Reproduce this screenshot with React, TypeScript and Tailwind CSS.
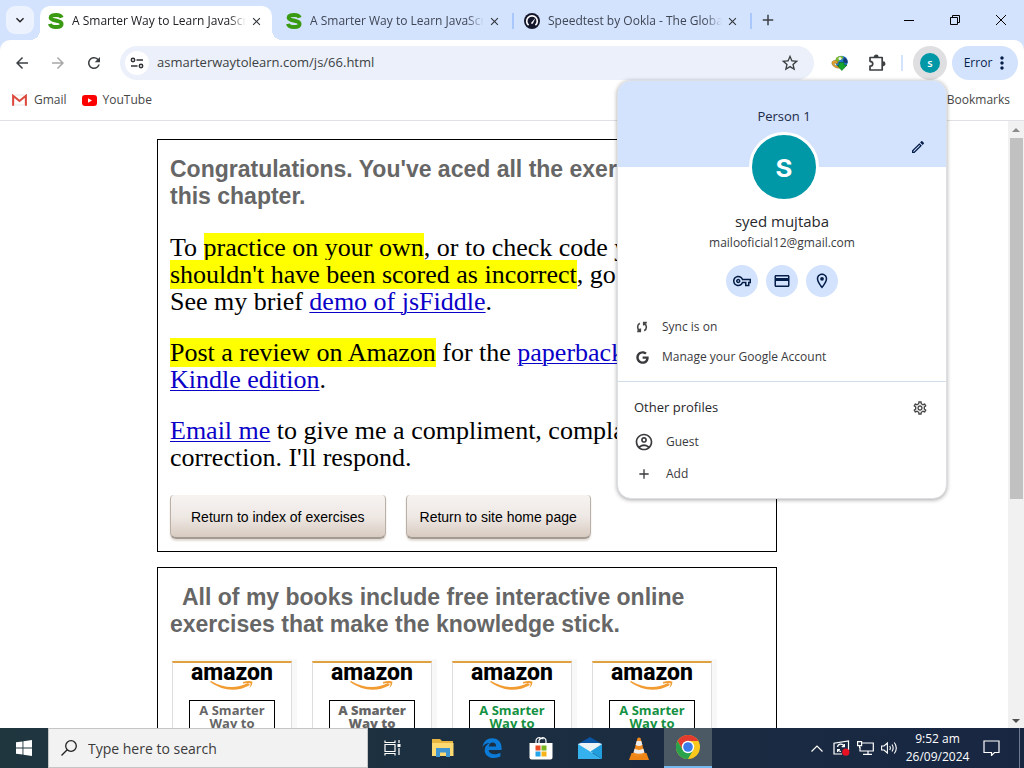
import React from "react";
import {
  MdArrowBack,
  MdArrowForward,
  MdRefresh,
  MdStarOutline,
  MdOutlineVpnKey,
  MdOutlineCreditCard,
  MdOutlineLocationOn,
  MdAdd,
  MdOutlineSettings,
  MdOutlineAccountCircle,
  MdOutlineEdit,
  MdExpandMore,
  MdClose,
  MdMoreVert,
  MdSync,
} from "react-icons/md";
import { FaGoogle } from "react-icons/fa";

const UI = "font-['Open_Sans','Noto_Sans',sans-serif]";

function SFavicon() {
  return (
    <svg viewBox="0 0 16 16" className="size-4 shrink-0" fill="none" stroke="#3a9a12" aria-hidden="true">
      <path d="M13.7 4.6C13 2.6 11 2 8.1 2C5 2 2.6 2.8 2.6 4.7C2.6 8.4 13.6 6.5 13.6 11C13.6 13.2 11.2 14 8.1 14C4.7 14 2.4 13 2 10.8" strokeWidth="3.9" />
    </svg>
  );
}

function SpeedFavicon() {
  return (
    <svg viewBox="0 0 16 16" className="size-4 shrink-0" aria-hidden="true">
      <circle cx="8" cy="8" r="8" fill="#15172b" />
      <path d="M4.6 12.2A5.3 5.3 0 1 1 11.4 12.2" fill="none" stroke="#fff" strokeWidth="1.7" />
      <path d="M7 9.9L11.4 5L8.9 10.4A1.2 1.2 0 0 1 7 9.9Z" fill="#fff" />
    </svg>
  );
}

function Tab({ title, icon, active }: { title: string; icon: React.ReactNode; active?: boolean }) {
  return (
    <div
      role="tab"
      aria-selected={!!active}
      className={`relative flex h-[34px] w-[232px] shrink-0 items-center pb-1 pl-2 pr-2 ${active ? "rounded-t-[10px] bg-white" : ""}`}
    >
      {active && (
        <>
          <span className="absolute -left-2.5 bottom-0 size-2.5 bg-[radial-gradient(circle_at_0_0,transparent_10px,white_10px)]" />
          <span className="absolute -right-2.5 bottom-0 size-2.5 bg-[radial-gradient(circle_at_100%_0,transparent_10px,white_10px)]" />
        </>
      )}
      {icon}
      <span
        className={`ml-2 w-[174px] overflow-hidden whitespace-nowrap text-[12px] [mask-image:linear-gradient(to_right,black_90%,transparent)] ${active ? "text-[#202124]" : "text-[#3f4654]"}`}
      >
        {title}
      </span>
      <button aria-label="Close tab" className="ml-auto flex size-4 items-center justify-center text-[#30343a]">
        <MdClose className="size-[13px]" />
      </button>
    </div>
  );
}

function Separator() {
  return <span className="mx-0.5 mb-1 h-4 w-0.5 shrink-0 bg-[#a8c7fa]" />;
}

function TabStrip() {
  return (
    <div className="flex h-10 shrink-0 items-end bg-[#d3e2fd]">
      <button aria-label="Search tabs" className="mb-1.5 ml-1.5 mr-1.5 flex size-7 shrink-0 items-center justify-center rounded-[9px] bg-[#ecf2fe] text-[#1f1f1f]">
        <MdExpandMore className="size-4" />
      </button>
      <div role="tablist" className="flex items-center">
        <Tab active title="A Smarter Way to Learn JavaScript" icon={<SFavicon />} />
        <span className="w-1.5" />
        <Tab title="A Smarter Way to Learn JavaScript" icon={<SFavicon />} />
        <Separator />
        <Tab title="Speedtest by Ookla - The Global Broadband" icon={<SpeedFavicon />} />
        <Separator />
      </div>
      <button aria-label="New tab" className="mb-1.5 flex size-7 shrink-0 items-center justify-center text-[#3c4043]">
        <MdAdd className="size-[18px]" />
      </button>
      <div className="ml-auto flex h-10 shrink-0 text-black">
        <button aria-label="Minimize" className="flex w-[46px] items-center justify-center">
          <svg viewBox="0 0 10 10" className="size-2.5"><path d="M0 5.5H10" stroke="currentColor" /></svg>
        </button>
        <button aria-label="Restore" className="flex w-[46px] items-center justify-center">
          <svg viewBox="0 0 10 10" className="size-2.5" fill="none" stroke="currentColor"><path d="M.5 2.5H7.5V9.5H.5ZM2.5 2.5V.5H9.5V7.5H7.5" /></svg>
        </button>
        <button aria-label="Close" className="flex w-[46px] items-center justify-center">
          <svg viewBox="0 0 10 10" className="size-2.5"><path d="M0 0L10 10M10 0L0 10" stroke="currentColor" /></svg>
        </button>
      </div>
    </div>
  );
}

function Toolbar() {
  const nav = "flex w-9 shrink-0 items-center justify-center";
  return (
    <div className="bg-[#d3e2fd]">
      <div className="flex h-[46px] items-center rounded-t-[10px] bg-white pl-1 pr-1.5 text-[#3c4043]">
        <button aria-label="Back" className={nav}><MdArrowBack className="size-[18px]" /></button>
        <button aria-label="Forward" className={`${nav} text-[#a8a8a8]`}><MdArrowForward className="size-[18px]" /></button>
        <button aria-label="Reload" className={nav}><MdRefresh className="size-[18px]" /></button>
        <div className="ml-2 flex h-[34px] min-w-0 flex-1 items-center rounded-full bg-[#ebf0fa] pl-[5px] pr-3.5">
          <button aria-label="View site information" className="flex size-6 shrink-0 items-center justify-center rounded-full bg-white">
            <svg viewBox="0 0 14 14" className="size-3.5" fill="none" stroke="#303236" strokeWidth="1.5">
              <circle cx="3" cy="4" r="1.7" /><path d="M6.5 4H13M1 10H7.5" /><circle cx="11" cy="10" r="1.7" />
            </svg>
          </button>
          <input aria-label="Address" defaultValue="asmarterwaytolearn.com/js/66.html" className="ml-2 min-w-0 flex-1 bg-transparent text-[13px] text-[#3c4043] outline-none" />
          <button aria-label="Bookmark this tab"><MdStarOutline className="size-5" /></button>
        </div>
        <button aria-label="Download manager" className="ml-[17px] mr-[18px]">
          <svg viewBox="0 0 18 18" className="size-[18px]">
            <circle cx="10.5" cy="8" r="6.2" fill="#2479ce" />
            <path d="M5 4Q8 1 12 2.4Q13 5 9 6Q7 9 4.5 8Z" fill="#7db928" />
            <path d="M13 3Q17 5 16.6 9Q14 10 12 7Z" fill="#193d72" />
            <path d="M1 10C0 7 4 5 7 8L6 10C4 8 2.5 9 3.5 11Q6 13 11 12V14Q3 15 1 10Z" fill="#e7a42d" stroke="#776314" strokeWidth=".5" />
            <path d="M8 8.5H13V11H16L10.8 16.5L6.5 11.5H8Z" fill="#18a52e" stroke="#08661a" strokeWidth=".6" />
            <circle cx="9" cy="4.5" r="1.5" fill="#e8f4f8" />
          </svg>
        </button>
        <button aria-label="Extensions" className="mr-3.5">
          <svg viewBox="0 0 20 20" className="size-5" fill="none" stroke="currentColor" strokeWidth="1.7" strokeLinejoin="round">
            <path d="M3 4.5H15.2V17H3V13.2C6.7 13 6.7 8.5 3 8.3Z" />
            <path d="M7.6 4A1.6 1.6 0 0 1 10.8 4ZM16 9.2A1.6 1.6 0 0 1 16 12.4Z" fill="currentColor" />
          </svg>
        </button>
        <span className="mr-2.5 h-4 w-0.5 bg-[#d3e2fd]" />
        <button aria-label="Profile" className="flex size-[34px] shrink-0 items-center justify-center rounded-full bg-[#dfdfe1]">
          <span className="flex size-5 items-center justify-center rounded-full bg-[#0097a7] text-[11px] font-semibold text-white">s</span>
        </button>
        <button className="ml-[5px] flex h-[34px] w-[66px] shrink-0 items-center justify-center rounded-full bg-[#d3e2fd] pl-1.5 text-[12px] text-[#041e49]">
          Error <MdMoreVert className="size-5" />
        </button>
      </div>
      <div className="flex h-[35px] items-center border-b border-[#dfe1e5] bg-white pb-1.5 pl-3 pr-3.5 pt-0 text-[12px] text-[#474747]">
        <a href="#gmail" className="flex items-center gap-[7px]">
          <svg viewBox="0 0 16 12" className="h-3 w-[15px]" fill="none">
            <path d="M1.2 12V1.5L8 7L14.8 1.5V12" stroke="#dc4a3e" strokeWidth="2.2" />
            <path d="M3 11.3H13M3 .7H13" stroke="#e4e4e4" />
          </svg>
          Gmail
        </a>
        <a href="#youtube" className="ml-[15px] flex items-center gap-1.5">
          <svg viewBox="0 0 15 11" className="h-[11px] w-[15px]"><rect width="15" height="11" rx="3" fill="#f00" /><path d="M6 3.2V7.8L10 5.5Z" fill="#fff" /></svg>
          YouTube
        </a>
        <a href="#bookmarks" className="ml-auto">All Bookmarks</a>
      </div>
    </div>
  );
}

function ProfileMenu() {
  const chip = "flex size-8 items-center justify-center rounded-full bg-[#d3e2fd] text-[#041e49]";
  return (
    <section aria-label="Profile" className="absolute right-[77px] top-20 w-[330px] overflow-hidden rounded-[14px] border border-[#dcdfe3] bg-white pb-2 text-[12px] text-[#3a3a3e] shadow-[0_1px_4px_rgba(0,0,0,0.35)]">
      <div className="relative h-[86px] bg-[#d3e2fd] pl-1 pt-[26px] text-center text-[13px] font-medium leading-[18px] text-[#1b2b48]">
        Person 1
        <button aria-label="Edit profile" className="absolute bottom-3 right-5 text-[#041e49]"><MdOutlineEdit className="size-4" /></button>
      </div>
      <div className="relative -mt-[35px] flex justify-center pl-1">
        <div className="flex size-[70px] items-center justify-center rounded-full border-[3px] border-white bg-[#0097a7] pb-1 font-['Roboto',sans-serif] text-[34px] font-medium leading-none text-white">s</div>
      </div>
      <h2 className="mt-[9px] text-center text-[15px] font-medium leading-5 text-[#28282b]">syed mujtaba</h2>
      <p className="mt-0.5 text-center leading-5">mailooficial12@gmail.com</p>
      <div className="mt-3 flex justify-center gap-2">
        <button aria-label="Passwords" className={chip}><MdOutlineVpnKey className="size-[18px]" /></button>
        <button aria-label="Payment methods" className={chip}><MdOutlineCreditCard className="size-[18px]" /></button>
        <button aria-label="Addresses" className={chip}><MdOutlineLocationOn className="size-[18px]" /></button>
      </div>
      <div className="mt-[15px] px-4">
        <button className="flex h-[30px] w-full items-center gap-3">
          <span className="flex w-4 justify-center">
            <svg viewBox="0 0 12 12" className="size-3" fill="none" stroke="#474747" strokeWidth="1.6">
              <path d="M3.8 2.2A4.4 4.4 0 0 0 3.8 9.8M8.2 9.8A4.4 4.4 0 0 0 8.2 2.2M1.2 10.4H4.3V7.4M10.8 1.6H7.7V4.6" />
            </svg>
          </span>
          Sync is on
        </button>
        <button className="flex h-[30px] w-full items-center gap-3"><span className="flex w-4 justify-center"><FaGoogle className="size-[13px]" /></span>Manage your Google Account</button>
      </div>
      <div className="mt-[9px] border-t border-[#cfdeea] px-4 pt-3">
        <div className="flex h-7 items-center justify-between pr-0.5 text-[13px] font-medium text-[#27272a]">
          Other profiles
          <button aria-label="Manage profiles"><MdOutlineSettings className="size-4 text-[#474747]" /></button>
        </div>
        <button className="mt-1 flex h-8 w-full items-center gap-3"><MdOutlineAccountCircle className="size-5" />Guest</button>
        <button className="flex h-8 w-full items-center gap-3"><span className="flex w-5 justify-center"><MdAdd className="size-4" /></span>Add</button>
      </div>
    </section>
  );
}

function AmazonCard({ color, heavy }: { color: string; heavy?: boolean }) {
  return (
    <a href="#book" className="flex w-[120px] flex-col items-center border-x border-t-2 border-x-[#dedede] border-t-[#dfa23e] bg-white shadow-[4px_-1px_0_1px_#f8f8f8]">
      <span className="h-[22px] font-['Roboto',sans-serif] text-[23px] font-extrabold leading-[20px] text-black">amazon</span>
      <svg viewBox="0 0 44 11" className="-mt-1 h-[11px] w-11">
        <path d="M1 0Q20 11 38 2L40 4Q20 15 0 1Z" fill="#f29b31" />
        <path d="M33 1Q39 -.8 42.5 .7Q42.5 4.5 39.4 7.5Q41 3.5 40.5 2.2Q38 1.5 33 2.4Z" fill="#f29b31" />
      </svg>
      <span className={`mt-2 h-16 w-[86px] border border-black pt-[3px] text-center text-[13px] leading-[13px] ${heavy ? "font-extrabold" : "font-bold"} ${color}`}>
        A Smarter
        <br />
        Way to
      </span>
    </a>
  );
}

function SiteButton({ wide, children }: { wide?: boolean; children: React.ReactNode }) {
  return (
    <button className={`${wide ? "px-5" : "px-[13px]"} h-11 rounded-b-md rounded-t-sm border-x border-b-2 border-x-[#b9b0a8] border-b-[#a39a92] bg-linear-to-b from-[#f6f3f1] via-[#efe9e5] to-[#d8cbc1] pt-0.5 font-['Liberation_Sans',sans-serif] text-[14px] text-black shadow-[0_2px_2px_#e2dcd6]`}>
      {children}
    </button>
  );
}

function WebPage() {
  const link = "text-[#0a00c8] underline decoration-1 underline-offset-2";
  return (
    <main className="flex min-h-0 flex-1 bg-white">
      <div className="min-w-0 flex-1 overflow-hidden pl-[157px] pt-[18px]">
        <section className="w-[620px] border border-black px-3 pb-3 pt-4 font-['Liberation_Serif',serif] text-[26px] leading-[27px] text-black">
          <h2 className="whitespace-nowrap font-['Liberation_Sans',sans-serif] text-[23px] font-bold text-[#666]">
            Congratulations. You've aced all the exercises for
            <br />
            this chapter.
          </h2>
          <p className="mt-6 whitespace-nowrap">
            To <mark className="bg-[#ff0]">practice on your own</mark>, or to check code you
            <br />
            <mark className="bg-[#ff0]">shouldn't have been scored as incorrect</mark>, go to
            <br />
            See my brief <a href="#demo" className={link}>demo of jsFiddle</a>.
          </p>
          <p className="mt-6 whitespace-nowrap">
            <mark className="bg-[#ff0]">Post a review on Amazon</mark> for the <a href="#paperback" className={link}>paperback</a>
            <br />
            <a href="#kindle" className={link}>Kindle edition</a>.
          </p>
          <p className="mt-6 whitespace-nowrap">
            <a href="#email" className={link}>Email me</a> to give me a compliment, complaint
            <br />
            correction. I'll respond.
          </p>
          <div className="mt-6 flex gap-5">
            <SiteButton wide>Return to index of exercises</SiteButton>
            <SiteButton>Return to site home page</SiteButton>
          </div>
        </section>
        <section className="mt-[15px] w-[620px] border border-black px-3 pt-4">
          <h2 className="font-['Liberation_Sans',sans-serif] text-[23px] font-bold leading-[27px] text-[#666]">
            <span className="pl-3">All of my books include free interactive online</span>
            <br />
            exercises that make the knowledge stick.
          </h2>
          <div className="mt-[23px] flex gap-5 pl-0.5">
            <AmazonCard color="text-[#666]" />
            <AmazonCard color="text-[#666]" heavy />
            <AmazonCard color="text-[#159143]" />
            <AmazonCard color="text-[#159143]" />
          </div>
        </section>
      </div>
      <div className="flex w-4 flex-col items-center bg-[#f1f1f1] py-[5px]">
        <svg viewBox="0 0 8 4" className="my-0.5 h-1 w-2"><path d="M0 4L4 0L8 4Z" fill="#8b8b8b" /></svg>
        <div className="mt-1 h-[361px] w-[13px] bg-[#c1c1c1]" />
        <svg viewBox="0 0 8 4" className="mt-auto h-1 w-2"><path d="M0 0L4 4L8 0Z" fill="#505050" /></svg>
      </div>
    </main>
  );
}

function Taskbar() {
  const app = "flex w-12 shrink-0 items-center justify-center";
  return (
    <footer className="flex h-10 shrink-0 bg-linear-to-r from-[#20363f] to-[#182642] text-white">
      <button aria-label="Start" className={app}>
        <svg viewBox="0 0 16 16" className="size-4" fill="#fff"><path d="M0 2.3L6.5 1.4V7.5H0ZM7.4 1.3L16 0V7.5H7.4ZM0 8.4H6.5V14.6L0 13.7ZM7.4 8.4H16V16L7.4 14.8Z" /></svg>
      </button>
      <label className="flex w-80 shrink-0 items-center border border-[#c3c5c6] bg-[#f2f2f2] pl-3">
        <svg viewBox="0 0 16 16" className="size-4" fill="none" stroke="#222" strokeWidth="1.3"><circle cx="10" cy="6" r="5.3" /><path d="M6.2 9.8L.5 15.5" /></svg>
        <input aria-label="Search" placeholder="Type here to search" className="ml-[11px] min-w-0 flex-1 bg-transparent text-[14px] outline-none placeholder:text-[#3b3b3b]" />
      </label>
      <button aria-label="Task view" className={app}>
        <svg viewBox="0 0 17 16" className="h-4 w-[17px]" fill="none" stroke="#fff" strokeWidth="1.2"><path d="M1 4.5H11V11.5H1ZM1 .5V2.5H11V.5M1 15.5V13.5H11V15.5M15 0V3M15 8V15" /><path d="M13.5 4H16.5V7H13.5Z" fill="#fff" stroke="none" /></svg>
      </button>
      <div className="flex gap-px pl-[3px]">
        <button aria-label="File Explorer" className={app}>
          <svg viewBox="0 0 22 20" className="h-5 w-[22px]"><path d="M0 1H8L10 3H21V17H0Z" fill="#e8b540" /><path d="M0 5H21.5V18H0Z" fill="#fcd971" /><path d="M4 10H18V19H14V14.5H8V19H4Z" fill="#3f94d2" /></svg>
        </button>
        <button aria-label="Edge" className={app}>
          <svg viewBox="0 0 20 20" className="size-5"><path d="M.5 9C1.5 3.5 5 .3 10.3 .3C16.3 .3 19.6 4.6 19.6 10V12H6.6C7 15 9.5 16.3 12.7 16.3C15 16.3 17 15.6 18.4 14.8V18.6Q15.6 20 12 20C6.3 20 2.7 16.8 2.7 12.2C2.7 8.8 4.7 6.3 7.8 5C4.7 5.1 2 6.5 .5 9ZM6.8 8.5H14.2C14.1 5.8 12.8 4.4 10.7 4.4C8.5 4.4 7.1 6 6.8 8.5Z" fill="#0b7bd7" /></svg>
        </button>
        <button aria-label="Store" className={app}>
          <svg viewBox="0 0 24 24" className="size-6"><path d="M7 7V5A3 3 0 0 1 12 2.5A3 3 0 0 1 17 5V7M10 7V4.5A3 3 0 0 1 14.5 3" fill="none" stroke="#fff" strokeWidth="1.2" /><path d="M.5 7H23.5V21.5Q23.5 23.5 21.5 23.5H2.5Q.5 23.5 .5 21.5Z" fill="#fff" /><path d="M6.5 9.5H11.5V14.5H6.5Z" fill="#e84b25" /><path d="M12.5 9.5H17.5V14.5H12.5Z" fill="#79b51f" /><path d="M6.5 15.5H11.5V20.5H6.5Z" fill="#23a4e8" /><path d="M12.5 15.5H17.5V20.5H12.5Z" fill="#f7b41a" /></svg>
        </button>
        <button aria-label="Mail" className={app}>
          <svg viewBox="0 0 24 22" className="h-[22px] w-6"><path d="M0 7L12 0L24 7V12H0Z" fill="#0a56a5" /><path d="M0 7L3 6H21L24 7V16H0Z" fill="#eef3f6" /><path d="M0 7L24 22H0Z" fill="#35b2ee" /><path d="M24 7V22L12.5 14.5Z" fill="#229ddd" /></svg>
        </button>
        <button aria-label="VLC" className={app}>
          <svg viewBox="0 0 20 23" className="h-[23px] w-5"><path d="M2.5 16H17.5L20 23H0Z" fill="#ed8414" /><path d="M8.5 1Q10 0 11.5 1L16 18Q10 21 4 18Z" fill="#f28a1d" /><path d="M7.7 4H12.3L13.4 8Q10 10 6.6 8ZM5.6 11.8Q10 14 14.4 11.8L15.5 15.5Q10 18 4.5 15.5Z" fill="#ececec" /></svg>
        </button>
        <button aria-label="Chrome" className={`${app} border-b-2 border-[#76b9ed] bg-[#4b5965]`}>
          <svg viewBox="0 0 24 24" className="size-6"><circle cx="12" cy="12" r="12" fill="#fbc91d" /><path d="M1.6 6A12 12 0 0 1 22.4 6H12V12L6.8 15Z" fill="#e33b2e" /><path d="M1.6 6L6.8 15L12 18L17.2 15L12 24A12 12 0 0 1 1.6 6Z" fill="#2aa24c" /><circle cx="12" cy="12" r="6.2" fill="#fff" /><circle cx="12" cy="12" r="4.8" fill="#3b7bea" /></svg>
        </button>
      </div>
      <div className="ml-auto flex items-center">
        <button aria-label="Show hidden icons"><svg viewBox="0 0 12 7" className="h-[7px] w-3" fill="none" stroke="#fff" strokeWidth="1.2"><path d="M.5 6.5L6 1L11.5 6.5" /></svg></button>
        <svg viewBox="0 0 17 16" className="ml-2.5 h-4 w-[17px]" fill="none" stroke="#fff" strokeWidth="1.2"><path d="M9 14H1V3.2L15.5 1V10M4.5 7A3.4 3.4 0 0 1 11 6.2M11.4 4V6.7H8.7M8 11.5A3.4 3.4 0 0 1 5 9.5M4.6 12V9.5H7" /><circle cx="12.8" cy="12.2" r="3.6" fill="#e81123" stroke="none" /></svg>
        <svg viewBox="0 0 17 14" className="ml-[7px] h-3.5 w-[17px]" fill="none" stroke="#fff" strokeWidth="1.2"><path d="M5 2H16.3V10H3V6M11 10V13.3M6 13.3H15M.6 .6H4.6V4.6H.6ZM2.6 4.6V7" /></svg>
        <svg viewBox="0 0 17 14" className="ml-[7px] h-3.5 w-[17px]" fill="none" stroke="#fff" strokeWidth="1.1"><path d="M.6 5V9H3L6.4 12V2L3 5ZM8.7 5Q10 7 8.7 9M11 3.5Q13.3 7 11 10.5M13.3 1.5Q17.3 7 13.3 12.5" /></svg>
        <time className="ml-2.5 flex w-[59px] flex-col items-center whitespace-nowrap text-[12px] leading-[18px]"><span>9:52 am</span><span>26/09/2024</span></time>
        <button aria-label="Notifications" className="ml-4"><svg viewBox="0 0 17 16" className="h-4 w-[17px]" fill="none" stroke="#fff" strokeWidth="1.2"><path d="M1 1H16V12.5H11.5L8.5 15.5V12.5H1Z" /></svg></button>
        <span className="ml-[19px] mr-1 h-10 w-px bg-[#6e7a8c]" />
      </div>
    </footer>
  );
}

export default function App() {
  return (
    <div className={`relative flex h-screen flex-col overflow-hidden bg-white ${UI}`}>
      <TabStrip />
      <Toolbar />
      <WebPage />
      <ProfileMenu />
      <Taskbar />
    </div>
  );
}
